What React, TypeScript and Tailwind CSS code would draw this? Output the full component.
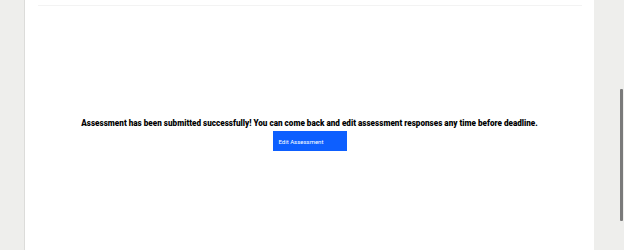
export default function App() {
  return (
    <div className="h-[250px] w-[624px] overflow-hidden flex bg-[#eeeeec] font-['Roboto',sans-serif]">
      <div className="w-[25px] border-r border-[#dcdcda]" />
      <main className="w-[569px] h-full bg-white flex flex-col">
        <div className="ml-[13px] mr-[12px] h-[6px] border-b border-[#f3f3f3]" />
        <div className="flex flex-col items-center mt-[112px]">
          <p className="text-[8.15px] font-black text-black leading-[10px]">
            Assessment has been submitted successfully! You can come back and edit assessment responses any time before deadline.
          </p>
          <button className="mt-[3px] w-[74px] h-[20px] bg-[#0d5fff] text-white text-[6px] text-left pl-[6px]">
            Edit Assessment
          </button>
        </div>
      </main>
      <div className="flex-1 flex justify-end">
        <div className="w-[3px] h-[132px] mt-[89px] bg-[#7a7a7a] rounded-[1px]" />
        <div className="w-[1px]" />
      </div>
    </div>
  );
}
